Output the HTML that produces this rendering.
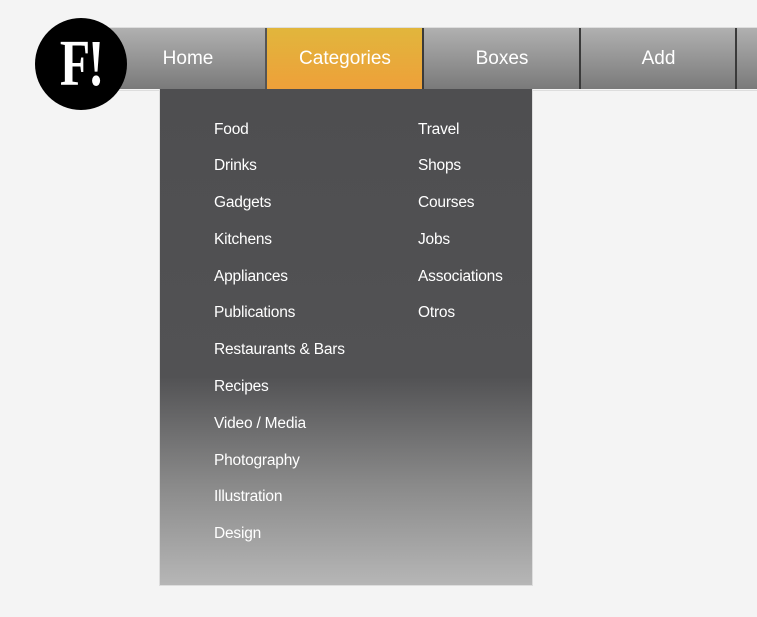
<!DOCTYPE html>
<html><head><style>
body{margin:0;width:757px;height:617px;background:#f4f4f4;position:relative;overflow:hidden;font-family:"Liberation Sans",sans-serif}
.bar{position:absolute;left:100px;top:27px;width:660px;height:62px;border-top:1px solid #ddd;border-bottom:1px solid #ddd}
.tab{position:absolute;top:28px;height:61px;background:linear-gradient(#b0b0b0,#7a7a7a);color:#fff;font-size:19px;text-align:center;line-height:61px;border-left:2px solid #3a3a3a;box-sizing:border-box}
.logo{position:absolute;left:35px;top:18px;width:92px;height:92px;border-radius:50%;background:#000}
.logo span{position:absolute;left:0;top:0;width:92px;color:#fff;font-family:"Liberation Serif",serif;font-weight:bold;font-size:66px;text-align:center;line-height:92px;letter-spacing:-3px;transform:scaleX(0.75)}
.dd{position:absolute;left:159px;top:89px;width:372px;height:496px;border:1px solid #ddd;border-top:none;background:linear-gradient(#4e4e50 0%,#525254 58%,#8a8a8a 80%,#b6b6b6 100%)}
.it{position:absolute;color:#fff;font-size:15.5px;line-height:20px;letter-spacing:-0.2px}
</style></head><body>
<div class="bar"></div>
<div class="tab" style="left:100px;width:166px;border-left:none;padding-left:10px">Home</div>
<div class="tab" style="left:265px;width:158px;background:linear-gradient(#e1b63c,#eea03a);border-left:2px solid #555">Categories</div>
<div class="tab" style="left:422px;width:158px">Boxes</div>
<div class="tab" style="left:579px;width:157px">Add</div>
<div class="tab" style="left:735px;width:30px"></div>
<div class="logo"><span>F!</span></div>
<div class="dd"></div>
<div class="it" style="left:214px;top:120px">Food</div>
<div class="it" style="left:214px;top:156px">Drinks</div>
<div class="it" style="left:214px;top:193px">Gadgets</div>
<div class="it" style="left:214px;top:230px">Kitchens</div>
<div class="it" style="left:214px;top:267px">Appliances</div>
<div class="it" style="left:214px;top:303px">Publications</div>
<div class="it" style="left:214px;top:340px">Restaurants &amp; Bars</div>
<div class="it" style="left:214px;top:377px">Recipes</div>
<div class="it" style="left:214px;top:414px">Video / Media</div>
<div class="it" style="left:214px;top:451px">Photography</div>
<div class="it" style="left:214px;top:487px">Illustration</div>
<div class="it" style="left:214px;top:524px">Design</div>
<div class="it" style="left:418px;top:120px">Travel</div>
<div class="it" style="left:418px;top:156px">Shops</div>
<div class="it" style="left:418px;top:193px">Courses</div>
<div class="it" style="left:418px;top:230px">Jobs</div>
<div class="it" style="left:418px;top:267px">Associations</div>
<div class="it" style="left:418px;top:303px">Otros</div>
</body></html>
